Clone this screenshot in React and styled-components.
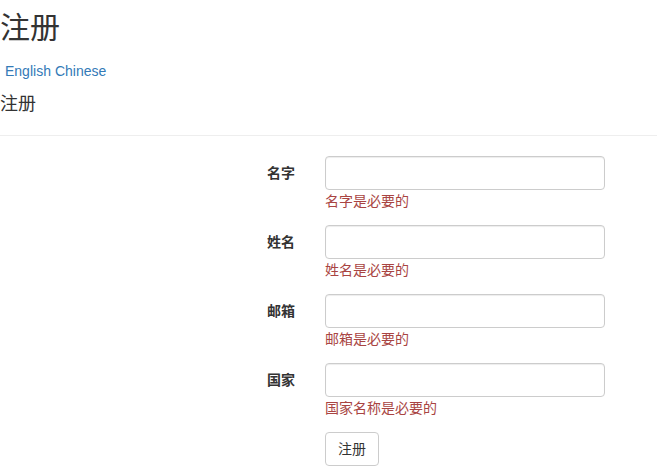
import { Fragment } from "react";
import styled, { createGlobalStyle } from "styled-components";

const GlobalStyle = createGlobalStyle`
  body {
    margin: 0;
    background: #ffffff;
    color: #333333;
    font-family: "Liberation Sans", "Noto Sans CJK SC", sans-serif;
    font-size: 14px;
    line-height: 20px;
  }
  * {
    box-sizing: border-box;
  }
`;

const Page = styled.div`
  display: flex;
  flex-direction: column;
`;

const Title = styled.h1`
  margin: 11px 0 0;
  font-size: 30px;
  line-height: 34px;
  font-weight: 400;
`;

const LangBar = styled.div`
  display: flex;
  gap: 4px;
  margin-top: 16px;
  padding-left: 5px;
  a {
    color: #337ab7;
    text-decoration: none;
  }
`;

const SubTitle = styled.h4`
  margin: 11px 0 0;
  font-size: 18px;
  line-height: 24px;
  font-weight: 400;
`;

const Rule = styled.hr`
  width: 100%;
  margin: 19px 0 20px;
  border: 0;
  border-top: 1px solid #eeeeee;
`;

const Form = styled.form`
  display: grid;
  grid-template-columns: 295px 280px;
  column-gap: 30px;
  row-gap: 14px;
`;

const Label = styled.label`
  padding-top: 7px;
  text-align: right;
  font-weight: 700;
`;

const Field = styled.div`
  display: flex;
  flex-direction: column;
`;

const Input = styled.input`
  height: 34px;
  width: 100%;
  padding: 6px 12px;
  border: 1px solid #cccccc;
  border-radius: 4px;
  box-shadow: inset 0 1px 1px rgba(0, 0, 0, 0.075);
  font: inherit;
  color: #555555;
`;

const Help = styled.span`
  margin-top: 1px;
  color: #a94442;
`;

const Button = styled.button`
  justify-self: start;
  height: 34px;
  padding: 6px 12px;
  border: 1px solid #cccccc;
  border-radius: 4px;
  background: #ffffff;
  color: #333333;
  font: inherit;
`;

const fields = [
  { id: "first", label: "名字", error: "名字是必要的" },
  { id: "last", label: "姓名", error: "姓名是必要的" },
  { id: "email", label: "邮箱", error: "邮箱是必要的" },
  { id: "country", label: "国家", error: "国家名称是必要的" },
];

export default function App() {
  return (
    <Page>
      <GlobalStyle />
      <Title>注册</Title>
      <LangBar>
        <a href="#">English</a>
        <a href="#">Chinese</a>
      </LangBar>
      <SubTitle>注册</SubTitle>
      <Rule />
      <Form onSubmit={(e) => e.preventDefault()}>
        {fields.map((f) => (
          <Fragment key={f.id}>
            <Label htmlFor={f.id}>{f.label}</Label>
            <Field>
              <Input id={f.id} type="text" />
              <Help>{f.error}</Help>
            </Field>
          </Fragment>
        ))}
        <div />
        <Button type="submit">注册</Button>
      </Form>
    </Page>
  );
}
